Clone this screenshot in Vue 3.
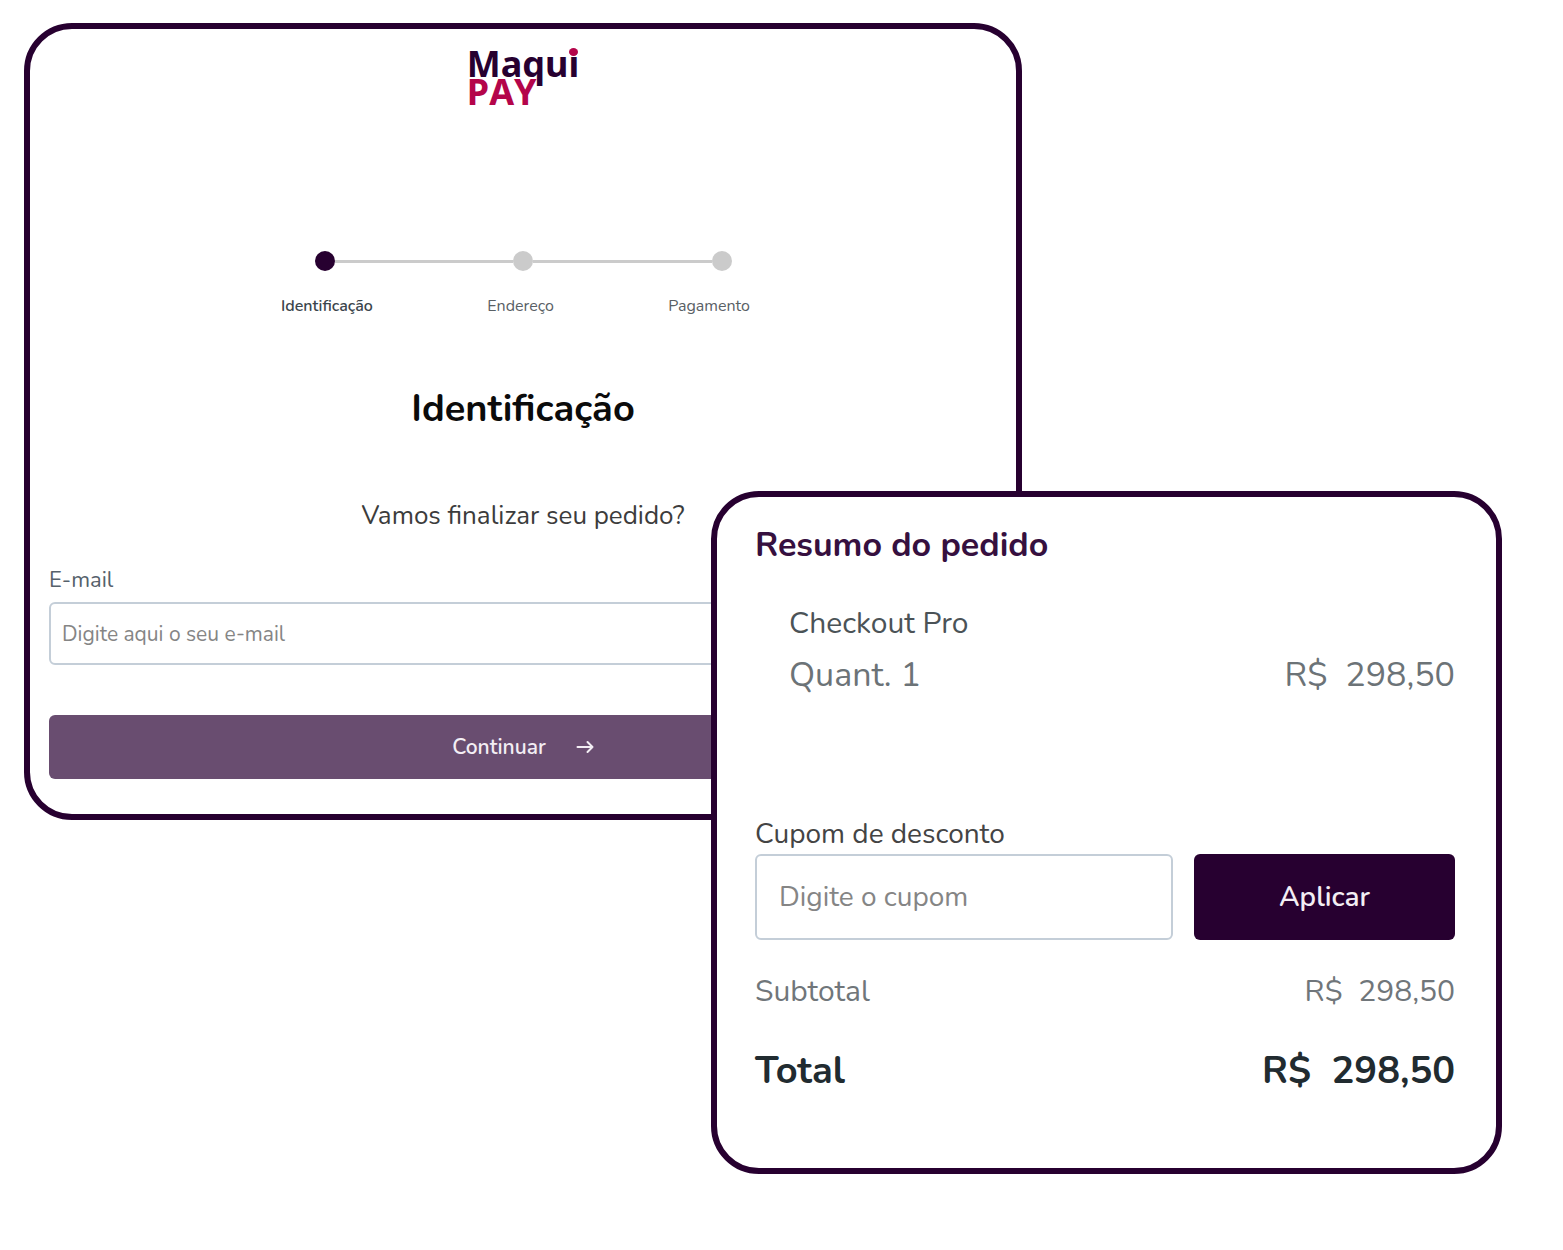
<script setup>
import { ref } from 'vue'

const email = ref('')
const coupon = ref('')
const price = 'R$\u00a0\u00a0298,50'
const steps = [
  { label: 'Identificação', active: true },
  { label: 'Endereço', active: false },
  { label: 'Pagamento', active: false },
]
</script>

<template>
  <main class="stage">
    <section class="card checkout">
      <div class="logo" aria-label="Maqui PAY">
        <span class="logo-top">Maqu<span class="logo-i">i</span></span>
        <span class="logo-bottom">PAY</span>
      </div>

      <div class="track" aria-hidden="true">
        <template v-for="(step, i) in steps" :key="step.label">
          <span v-if="i > 0" class="line"></span>
          <span class="dot" :class="{ active: step.active }"></span>
        </template>
      </div>
      <ol class="labels">
        <li v-for="step in steps" :key="step.label" :class="{ current: step.active }">{{ step.label }}</li>
      </ol>

      <h1>Identificação</h1>
      <p class="lead">Vamos finalizar seu pedido?</p>

      <form class="form" @submit.prevent>
        <label for="email">E-mail</label>
        <input id="email" v-model="email" type="email" placeholder="Digite aqui o seu e-mail" />
        <button type="submit" class="continue">
          <span>Continuar</span>
          <svg width="18" height="16" viewBox="0 0 18 16" fill="none" stroke="currentColor" stroke-width="2" stroke-linecap="round" stroke-linejoin="round" aria-hidden="true">
            <path d="M1.5 8H16.5M11.5 3L16.5 8l-5 5" />
          </svg>
        </button>
      </form>
    </section>

    <section class="card summary">
      <h2>Resumo do pedido</h2>
      <div class="item">
        <p class="name">Checkout Pro</p>
        <p class="row quantity"><span>Quant. 1</span><span>{{ price }}</span></p>
      </div>

      <form class="coupon" @submit.prevent>
        <label for="coupon">Cupom de desconto</label>
        <div class="coupon-row">
          <input id="coupon" v-model="coupon" type="text" placeholder="Digite o cupom" />
          <button type="submit">Aplicar</button>
        </div>
      </form>

      <dl>
        <div class="row subtotal"><dt>Subtotal</dt><dd>{{ price }}</dd></div>
        <div class="row total"><dt>Total</dt><dd>{{ price }}</dd></div>
      </dl>
    </section>
  </main>
</template>

<style>
body {
  margin: 0;
  background: #fff;
}
</style>

<style scoped>
.stage {
  display: grid;
  grid-template-columns: minmax(0, 687fr) minmax(0, 311fr) minmax(0, 480fr);
  align-items: start;
  padding: 23px 61px 76px 24px;
  font-family: Nunito, Lato, sans-serif;
  color: #212b30;
}

.card {
  box-sizing: border-box;
  grid-row: 1;
  border: 6px solid #270030;
  border-radius: 48px;
  background: #fff;
}

h1, h2, p, ol, dl, dd {
  margin: 0;
  padding: 0;
}

input, button {
  box-sizing: border-box;
  font-family: inherit;
  border-radius: 6px;
}

input {
  border: 2px solid #c4ced8;
  background: #fff;
  color: #212b30;
}

input::placeholder {
  color: #858585;
  opacity: 1;
}

button {
  border: 0;
  padding: 0;
  color: #f3eef4;
  font-weight: 600;
  cursor: pointer;
}

.checkout {
  grid-column: 1 / 3;
  display: flex;
  flex-direction: column;
  align-items: center;
  padding: 21px 19px 35px;
}

.logo {
  display: flex;
  flex-direction: column;
  font: 700 36px/28px "Noto Sans", sans-serif;
  color: #270030;
}

.logo-i {
  position: relative;
}

.logo-i::after {
  content: "";
  position: absolute;
  top: 9px;
  left: 1px;
  width: 9px;
  height: 8px;
  border-radius: 50%;
  background: #b4054a;
}

.logo-bottom {
  font-kerning: none;
  color: #b4054a;
}

.track {
  display: flex;
  align-items: center;
  width: 417px;
  margin-top: 145px;
}

.dot {
  width: 20px;
  height: 20px;
  border-radius: 50%;
  background: #cbcbcb;
}

.dot.active {
  background: #270030;
}

.line {
  flex: 1;
  height: 3px;
  background: #cbcbcb;
}

.labels {
  box-sizing: border-box;
  display: flex;
  justify-content: space-between;
  width: 484px;
  padding-right: 15px;
  margin-top: 23px;
  list-style: none;
  font-size: 16px;
  line-height: 24px;
  color: #596065;
}

.current {
  font-weight: 600;
  color: #3b454c;
}

h1 {
  margin-top: 67px;
  font-size: 38px;
  line-height: 48px;
  font-weight: 700;
  color: #0b0b0b;
}

.lead {
  margin-top: 67px;
  font-size: 26px;
  line-height: 32px;
  color: #3c3c3c;
}

.form {
  display: flex;
  flex-direction: column;
  align-self: stretch;
  margin-top: 34px;
  font-size: 22px;
  line-height: 28px;
}

.form label {
  align-self: flex-start;
  color: #56616b;
}

.form input {
  height: 63px;
  margin-top: 8px;
  padding: 0 11px;
  font-size: 21px;
}

.continue {
  display: flex;
  align-items: center;
  justify-content: center;
  gap: 30px;
  height: 64px;
  margin-top: 50px;
  background: #694d70;
  font-size: 21px;
}

.summary {
  grid-column: 2 / 4;
  position: relative;
  margin-top: 468px;
  padding: 28px 41px 73px 38px;
}

h2 {
  font-size: 34px;
  line-height: 40px;
  font-weight: 700;
  color: #36103f;
}

.item {
  margin-top: 41px;
  padding-left: 34px;
}

.name {
  font-size: 30px;
  line-height: 36px;
  color: #4b5357;
}

.row {
  display: flex;
  justify-content: space-between;
}

.quantity {
  margin-top: 13px;
  font-size: 34px;
  line-height: 40px;
  color: #6c7377;
}

.coupon {
  margin-top: 123px;
}

.coupon label {
  display: block;
  font-size: 28px;
  line-height: 32px;
  color: #444;
}

.coupon-row {
  display: grid;
  grid-template-columns: minmax(0, 418fr) minmax(0, 261fr);
  gap: 21px;
  margin-top: 4px;
}

.coupon input {
  height: 86px;
  padding: 0 22px;
  font-size: 28px;
}

.coupon button {
  height: 86px;
  background: #270030;
  font-size: 28px;
}

.subtotal {
  margin-top: 34px;
  font-size: 30px;
  line-height: 36px;
  color: #70767a;
}

.total {
  margin-top: 37px;
  font-size: 38px;
  line-height: 48px;
  font-weight: 700;
}
</style>
